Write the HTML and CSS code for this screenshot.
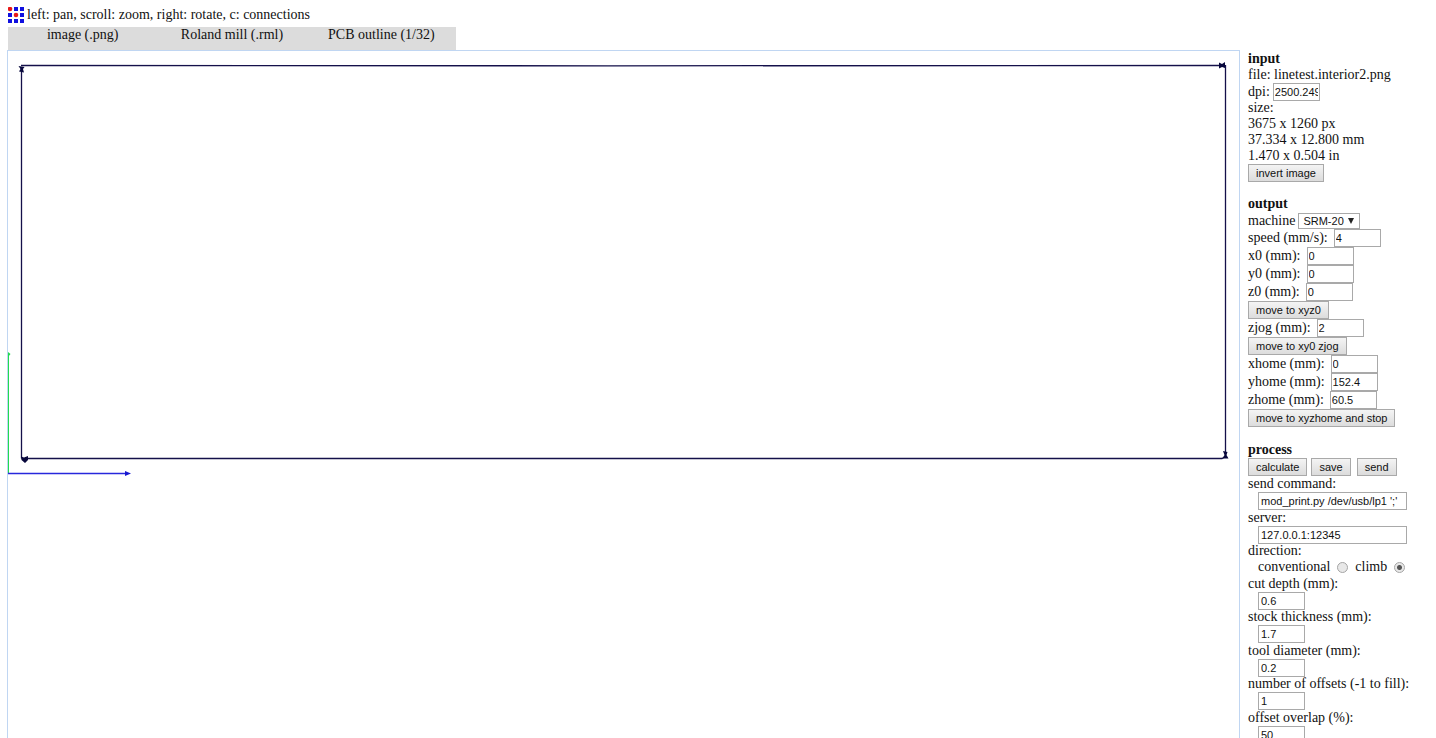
FILE: index.html
```
<!DOCTYPE html>
<html lang="en">
<head>
<meta charset="utf-8">
<title>fab modules</title>
<link rel="stylesheet" href="styles.css">
</head>
<body>
<header class="top">
  <svg class="logo" viewBox="0 0 16 16" aria-hidden="true">
    <g fill="#1010e0">
      <rect x="6" y="0" width="4" height="4"/><rect x="12" y="0" width="4" height="4"/>
      <rect x="0" y="6" width="4" height="4"/><rect x="12" y="6" width="4" height="4"/>
      <rect x="0" y="12" width="4" height="4"/><rect x="6" y="12" width="4" height="4"/><rect x="12" y="12" width="4" height="4"/>
    </g>
    <circle cx="2" cy="2" r="2.300" fill="#e81818"/><circle cx="8" cy="8" r="2.300" fill="#e81818"/>
  </svg>
  <span>left: pan, scroll: zoom, right: rotate, c: connections</span>
</header>
<nav class="menu">
  <span class="menu-item">image (.png)</span>
  <span class="menu-item">Roland mill (.rml)</span>
  <span class="menu-item">PCB outline (1/32)</span>
</nav>
<div class="workspace">
  <main class="view">
    <svg class="toolpath" viewBox="0 0 1231 687" preserveAspectRatio="xMinYMin meet" role="img" aria-label="Tool path">
      <g fill="none" stroke="#14104a" stroke-width="1.3">
        <path d="M13.5 16V407.5"/>
        <path d="M13 14.5L600 14.800L1217 14.5"/>
        <path d="M1217.5 14V404"/>
        <path d="M17 407.500H1214L1218 405"/>
      </g>
      <g fill="#08083c">
        <path d="M10.500 15L16.500 16L15 18L16 21.500L11 20.500L12.500 18Z"/>
        <path d="M1211 11.500L1214 13L1217 11V17L1214 16L1211 17.500Z"/>
        <path d="M1215 400L1219.500 401L1218.500 404L1220.500 407.500L1214.500 407.500L1216.500 404Z"/>
        <path d="M13 405.500L16 406.500L20 405V409L17 412L13.500 409Z"/>
      </g>
      <path d="M.5 423V303" fill="none" stroke="#20dc50"/>
      <path d="M0 301L2.500 303L0 306Z" fill="#20dc50"/>
      <path d="M0 422.500H119" fill="none" stroke="#2828dc" stroke-width="1.300"/>
      <path d="M117 420L123 422.500L117 425Z" fill="#1818d0"/>
    </svg>
  </main>
  <aside class="panel">
    <section class="section">
      <h2 class="title">input</h2>
      <div class="row">file: linetest.interior2.png</div>
      <div class="row tight"><label for="dpi">dpi:</label><input class="num" id="dpi" value="2500.249"></div>
      <div class="row">size:</div>
      <div class="row">3675 x 1260 px</div>
      <div class="row">37.334 x 12.800 mm</div>
      <div class="row">1.470 x 0.504 in</div>
      <div class="row field"><button class="btn">invert image</button></div>
    </section>
    <section class="section">
      <h2 class="title">output</h2>
      <div class="row tight"><label for="machine">machine</label><select class="select" id="machine"><option>SRM-20</option></select></div>
      <div class="row field"><label for="speed">speed (mm/s):</label><input class="num" id="speed" value="4"></div>
      <div class="row field"><label for="x0">x0 (mm):</label><input class="num" id="x0" value="0"></div>
      <div class="row field"><label for="y0">y0 (mm):</label><input class="num" id="y0" value="0"></div>
      <div class="row field"><label for="z0">z0 (mm):</label><input class="num" id="z0" value="0"></div>
      <div class="row field"><button class="btn">move to xyz0</button></div>
      <div class="row field"><label for="zjog">zjog (mm):</label><input class="num" id="zjog" value="2"></div>
      <div class="row field"><button class="btn">move to xy0 zjog</button></div>
      <div class="row field"><label for="xhome">xhome (mm):</label><input class="num" id="xhome" value="0"></div>
      <div class="row field"><label for="yhome">yhome (mm):</label><input class="num" id="yhome" value="152.4"></div>
      <div class="row field"><label for="zhome">zhome (mm):</label><input class="num" id="zhome" value="60.5"></div>
      <div class="row field"><button class="btn">move to xyzhome and stop</button></div>
    </section>
    <section class="section process">
      <h2 class="title">process</h2>
      <div class="row actions"><button class="btn">calculate</button><button class="btn">save</button><button class="btn send">send</button></div>
      <div class="stack wide"><label for="cmd">send command:</label><input class="num text" id="cmd" value="mod_print.py /dev/usb/lp1 ';'"></div>
      <div class="stack"><label for="server">server:</label><input class="num text" id="server" value="127.0.0.1:12345"></div>
      <div class="stack" role="radiogroup" aria-labelledby="dir"><span id="dir">direction:</span>
        <div class="radios"><label for="conv">conventional</label><input class="radio" type="radio" name="dir" id="conv"><label for="climb">climb</label><input class="radio" type="radio" name="dir" id="climb" checked></div>
      </div>
      <div class="stack"><label for="depth">cut depth (mm):</label><input class="num" id="depth" value="0.6"></div>
      <div class="stack wide"><label for="stock">stock thickness (mm):</label><input class="num" id="stock" value="1.7"></div>
      <div class="stack"><label for="tool">tool diameter (mm):</label><input class="num" id="tool" value="0.2"></div>
      <div class="stack wide"><label for="offsets">number of offsets (-1 to fill):</label><input class="num" id="offsets" value="1"></div>
      <div class="stack"><label for="overlap">offset overlap (%):</label><input class="num" id="overlap" value="50"></div>
    </section>
  </aside>
</div>
</body>
</html>
```
FILE: styles.css
```
* { box-sizing: border-box; }
body {
  display: flex;
  flex-direction: column;
  height: 100vh;
  margin: 0;
  padding: 7px 8px 0;
  overflow: hidden;
  background: #fff;
  color: #111;
  font: 14px/16px "Liberation Serif", "Times New Roman", serif;
}
.top { display: flex; gap: 3px; height: 20px; }
.logo { width: 16px; height: 16px; flex: none; }
.menu {
  display: grid;
  grid-template-columns: repeat(3, 1fr);
  width: 448px;
  height: 23px;
  background: #dcdcdc;
  text-align: center;
}
.workspace { display: flex; flex: 1; min-height: 0; gap: 8px; }
.view {
  flex: 1;
  min-width: 0;
  overflow: hidden;
  margin-left: -1px;
  border: 1px solid #c0d6f2;
  border-bottom: 0;
}
.toolpath { display: block; width: 100%; }
.panel { width: 180px; flex: none; padding-top: 1px; }
.section { margin-bottom: 14px; }
.process { padding-top: 1px; }
.title { margin: 0; font-size: 14px; line-height: 16px; }
.row { display: flex; align-items: center; height: 16px; white-space: nowrap; }
.field { height: 18px; gap: 6px; }
.tight { height: 17px; gap: 3px; }
.num, .btn, .select {
  height: 18px;
  margin: 0;
  border: 1px solid #a9a9a9;
  border-radius: 0;
  background: #fff;
  color: #111;
  font: 11px "Liberation Sans", Arial, sans-serif;
}
.num { width: 47px; padding: 0 1px; }
.text { width: 149px; }
.btn { padding: 0 7px; background: linear-gradient(#f4f4f4, #dcdcdc); }
.select {
  width: 62px;
  height: 16px;
  padding: 0 0 0 4px;
  appearance: none;
  background: #fff url("data:image/svg+xml,%3Csvg xmlns='http://www.w3.org/2000/svg' width='6' height='6'%3E%3Cpath d='M0 0H6L3 6Z' fill='%23222'/%3E%3C/svg%3E") no-repeat right 5px center;
}
.actions { height: 18px; gap: 4px; }
.send { margin-left: 2px; }
.stack { display: flex; flex-direction: column; height: 33px; white-space: nowrap; }
.wide { height: 34px; }
.stack > .num { flex: none; margin-left: 10px; padding-left: 2px; }
.radios { display: flex; align-items: center; gap: 7px; padding-left: 10px; }
.radio {
  appearance: none;
  width: 11px;
  height: 11px;
  margin: 0;
  border: 1px solid #a5a5a5;
  border-radius: 50%;
  background: #e8e8e8;
}
.radio:checked { background: radial-gradient(circle, #555 0 2px, #e8e8e8 3px); }
```
